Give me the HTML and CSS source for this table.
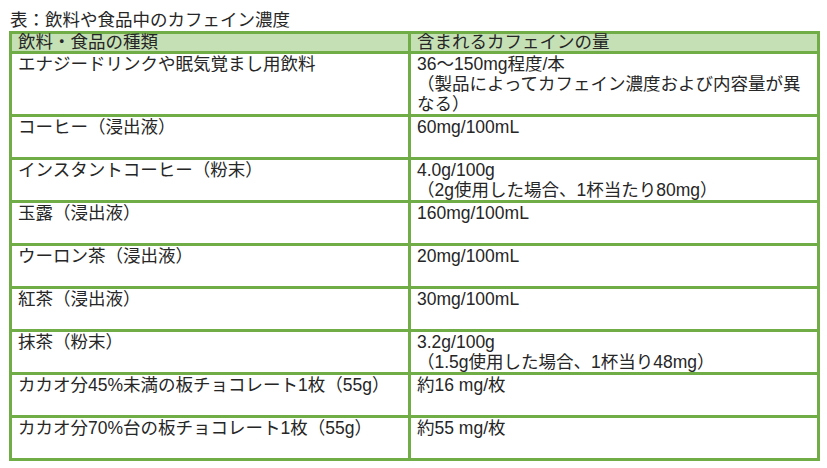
FILE: index.html
```html
<!DOCTYPE html>
<html lang="ja">
<head>
<meta charset="utf-8">
<title>カフェイン濃度</title>
<link rel="stylesheet" href="styles.css">
</head>
<body>
<div class="title">表：飲料や食品中のカフェイン濃度</div>
<div class="table">
  <div class="cell head">飲料・食品の種類</div>
  <div class="cell head">含まれるカフェインの量</div>

  <div class="cell">エナジードリンクや眠気覚まし用飲料</div>
  <div class="cell">36～150mg程度/本<br>（製品によってカフェイン濃度および内容量が異<br>なる）</div>

  <div class="cell">コーヒー（浸出液）</div>
  <div class="cell">60mg/100mL</div>

  <div class="cell">インスタントコーヒー（粉末）</div>
  <div class="cell">4.0g/100g<br>（2g使用した場合、1杯当たり80mg）</div>

  <div class="cell">玉露（浸出液）</div>
  <div class="cell">160mg/100mL</div>

  <div class="cell">ウーロン茶（浸出液）</div>
  <div class="cell">20mg/100mL</div>

  <div class="cell">紅茶（浸出液）</div>
  <div class="cell">30mg/100mL</div>

  <div class="cell">抹茶（粉末）</div>
  <div class="cell">3.2g/100g<br>（1.5g使用した場合、1杯当り48mg）</div>

  <div class="cell">カカオ分45%未満の板チョコレート1枚（55g）</div>
  <div class="cell">約16 mg/枚</div>

  <div class="cell">カカオ分70%台の板チョコレート1枚（55g）</div>
  <div class="cell">約55 mg/枚</div>
</div>
</body>
</html>
```
FILE: styles.css
```css
html, body {
  margin: 0;
  background: #ffffff;
}
body {
  padding: 9px 0 0 9px;
  font-family: "Liberation Sans", "Noto Sans CJK JP", sans-serif;
  font-size: 17.5px;
  color: #262626;
}
.title {
  margin-left: 1px;
  height: 22px;
  line-height: 22px;
  white-space: nowrap;
}
.table {
  display: grid;
  grid-template-columns: 396px 406px;
  gap: 3px;
  padding: 3px;
  width: 811px;
  box-sizing: border-box;
  background: #70ad47;
}
.cell {
  background: #ffffff;
  padding: 0 4px 0 6px;
  line-height: 20px;
  min-height: 40px;
  white-space: nowrap;
}
.cell.head {
  background: #c5e0b4;
  line-height: 17px;
  min-height: 17px;
}
```
